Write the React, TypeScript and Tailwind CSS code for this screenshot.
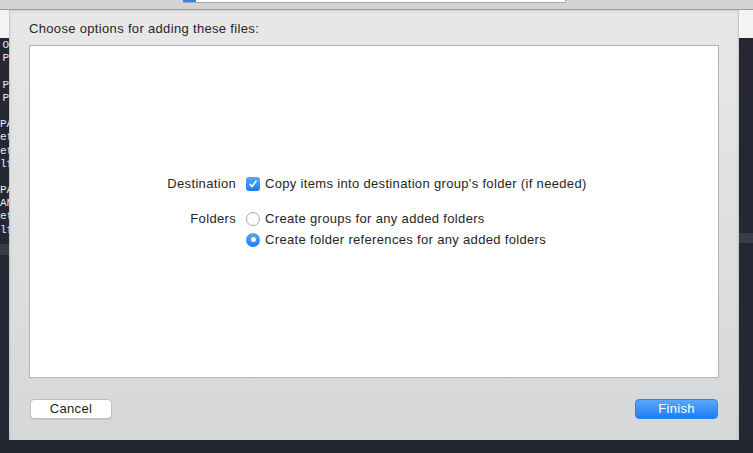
import React from 'react';

const TERMINAL_LINES = ['O', 'P', '', 'P', 'P', '', 'PA', 'et', 'et', 'lf', '', 'PA', 'AN', 'et', 'lf'];

function Checkbox() {
  return (
    <span className="w-[14px] h-[14px] rounded-[3px] bg-gradient-to-b from-[#5aa6fb] to-[#1b7bf3] flex items-center justify-center shrink-0">
      <svg width="10" height="10" viewBox="0 0 10 10" fill="none">
        <path d="M2 5.3 L4.1 7.6 L8 2.2" stroke="white" strokeWidth="1.6" strokeLinecap="round" strokeLinejoin="round" />
      </svg>
    </span>
  );
}

function Radio({ checked }: { checked?: boolean }) {
  if (checked) {
    return (
      <span className="w-[14px] h-[14px] rounded-full bg-gradient-to-b from-[#5aa6fb] to-[#1b7bf3] flex items-center justify-center shrink-0">
        <span className="w-[5px] h-[5px] rounded-full bg-white" />
      </span>
    );
  }
  return <span className="w-[14px] h-[14px] rounded-full bg-white border border-[#a9a9a9] shrink-0" />;
}

export default function App() {
  return (
    <div
      className="w-[753px] h-[453px] bg-[#22252f] flex flex-col overflow-hidden text-[13px] tracking-[0.33px] text-[#262626]"
      style={{ fontFamily: '"Liberation Sans", Arial, sans-serif' }}
    >
      {/* toolbar strip behind the sheet */}
      <div className="h-[10px] bg-[#d3d3d3] border-b border-[#9d9d9d] flex shrink-0">
        <div className="ml-[183px] h-[3px] w-[383px] flex border-b border-r border-[#a9a9a9] rounded-br-[2px]">
          <div className="w-[13px] bg-[#2a83f5]" />
          <div className="flex-1 bg-white" />
        </div>
      </div>

      <div className="flex h-[430px]">
        {/* terminal on the left */}
        <div className="w-[9px] flex flex-col overflow-hidden">
          <div className="h-[28px] bg-[#f4f4f4]" />
          <div className="flex-1 bg-[#252832] flex flex-col">
            <div className="pt-[1px] flex flex-col tracking-normal" style={{ fontFamily: '"Liberation Mono", monospace' }}>
              {TERMINAL_LINES.map((line, i) => (
                <div key={i} className="h-[13.2px] leading-[13.2px] text-[11px] text-[#ececec] text-right whitespace-nowrap">
                  {line}
                </div>
              ))}
            </div>
            <div className="mt-[7px] h-[11px] bg-[#3a3d45]" />
          </div>
        </div>

        {/* sheet */}
        <div className="w-[730px] h-[430px] bg-gradient-to-b from-[#e8e8e8] to-[#d6d7d9] border-x border-[#c9c9c9] shadow-[inset_0_2px_3px_rgba(0,0,0,0.08)] flex flex-col px-[19px]">
          <div className="mt-[11px] h-[16px] leading-[16px]">Choose options for adding these files:</div>
          <div className="mt-[8px] h-[333px] bg-white border border-[#b3b3b3] flex items-center">
            <div className="grid grid-cols-[216px_1fr] w-full">
              <div className="h-[21px] flex items-center justify-end pr-[10px]">Destination</div>
              <div className="h-[21px] flex items-center gap-[5px]">
                <Checkbox />
                <span>Copy items into destination group's folder (if needed)</span>
              </div>
              <div className="h-[14px] col-span-2" />
              <div className="h-[21px] flex items-center justify-end pr-[10px]">Folders</div>
              <div className="h-[21px] flex items-center gap-[5px]">
                <Radio />
                <span>Create groups for any added folders</span>
              </div>
              <div className="h-[21px]" />
              <div className="h-[21px] flex items-center gap-[5px]">
                <Radio checked />
                <span>Create folder references for any added folders</span>
              </div>
            </div>
          </div>
          <div className="mt-[21px] flex justify-between px-[1px]">
            <button className="w-[82px] h-[20px] rounded-[4px] bg-white border border-[#bdbdbd] shadow-[0_1px_0_rgba(0,0,0,0.08)] text-[13px] leading-[18px] text-[#1e1e1e]">
              Cancel
            </button>
            <button className="w-[83px] h-[20px] rounded-[4px] bg-gradient-to-b from-[#59a8fc] to-[#1b7bf4] border border-[#2d82ee] text-[13px] leading-[18px] text-white">
              Finish
            </button>
          </div>
        </div>

        {/* right side behind the sheet */}
        <div className="flex-1 flex flex-col">
          <div className="h-[28px] bg-[#f4f4f4]" />
          <div className="flex-1 bg-[#252832] flex flex-col">
            <div className="mt-[195px] h-[10px] bg-[#3a3d45]" />
          </div>
        </div>
      </div>
    </div>
  );
}
